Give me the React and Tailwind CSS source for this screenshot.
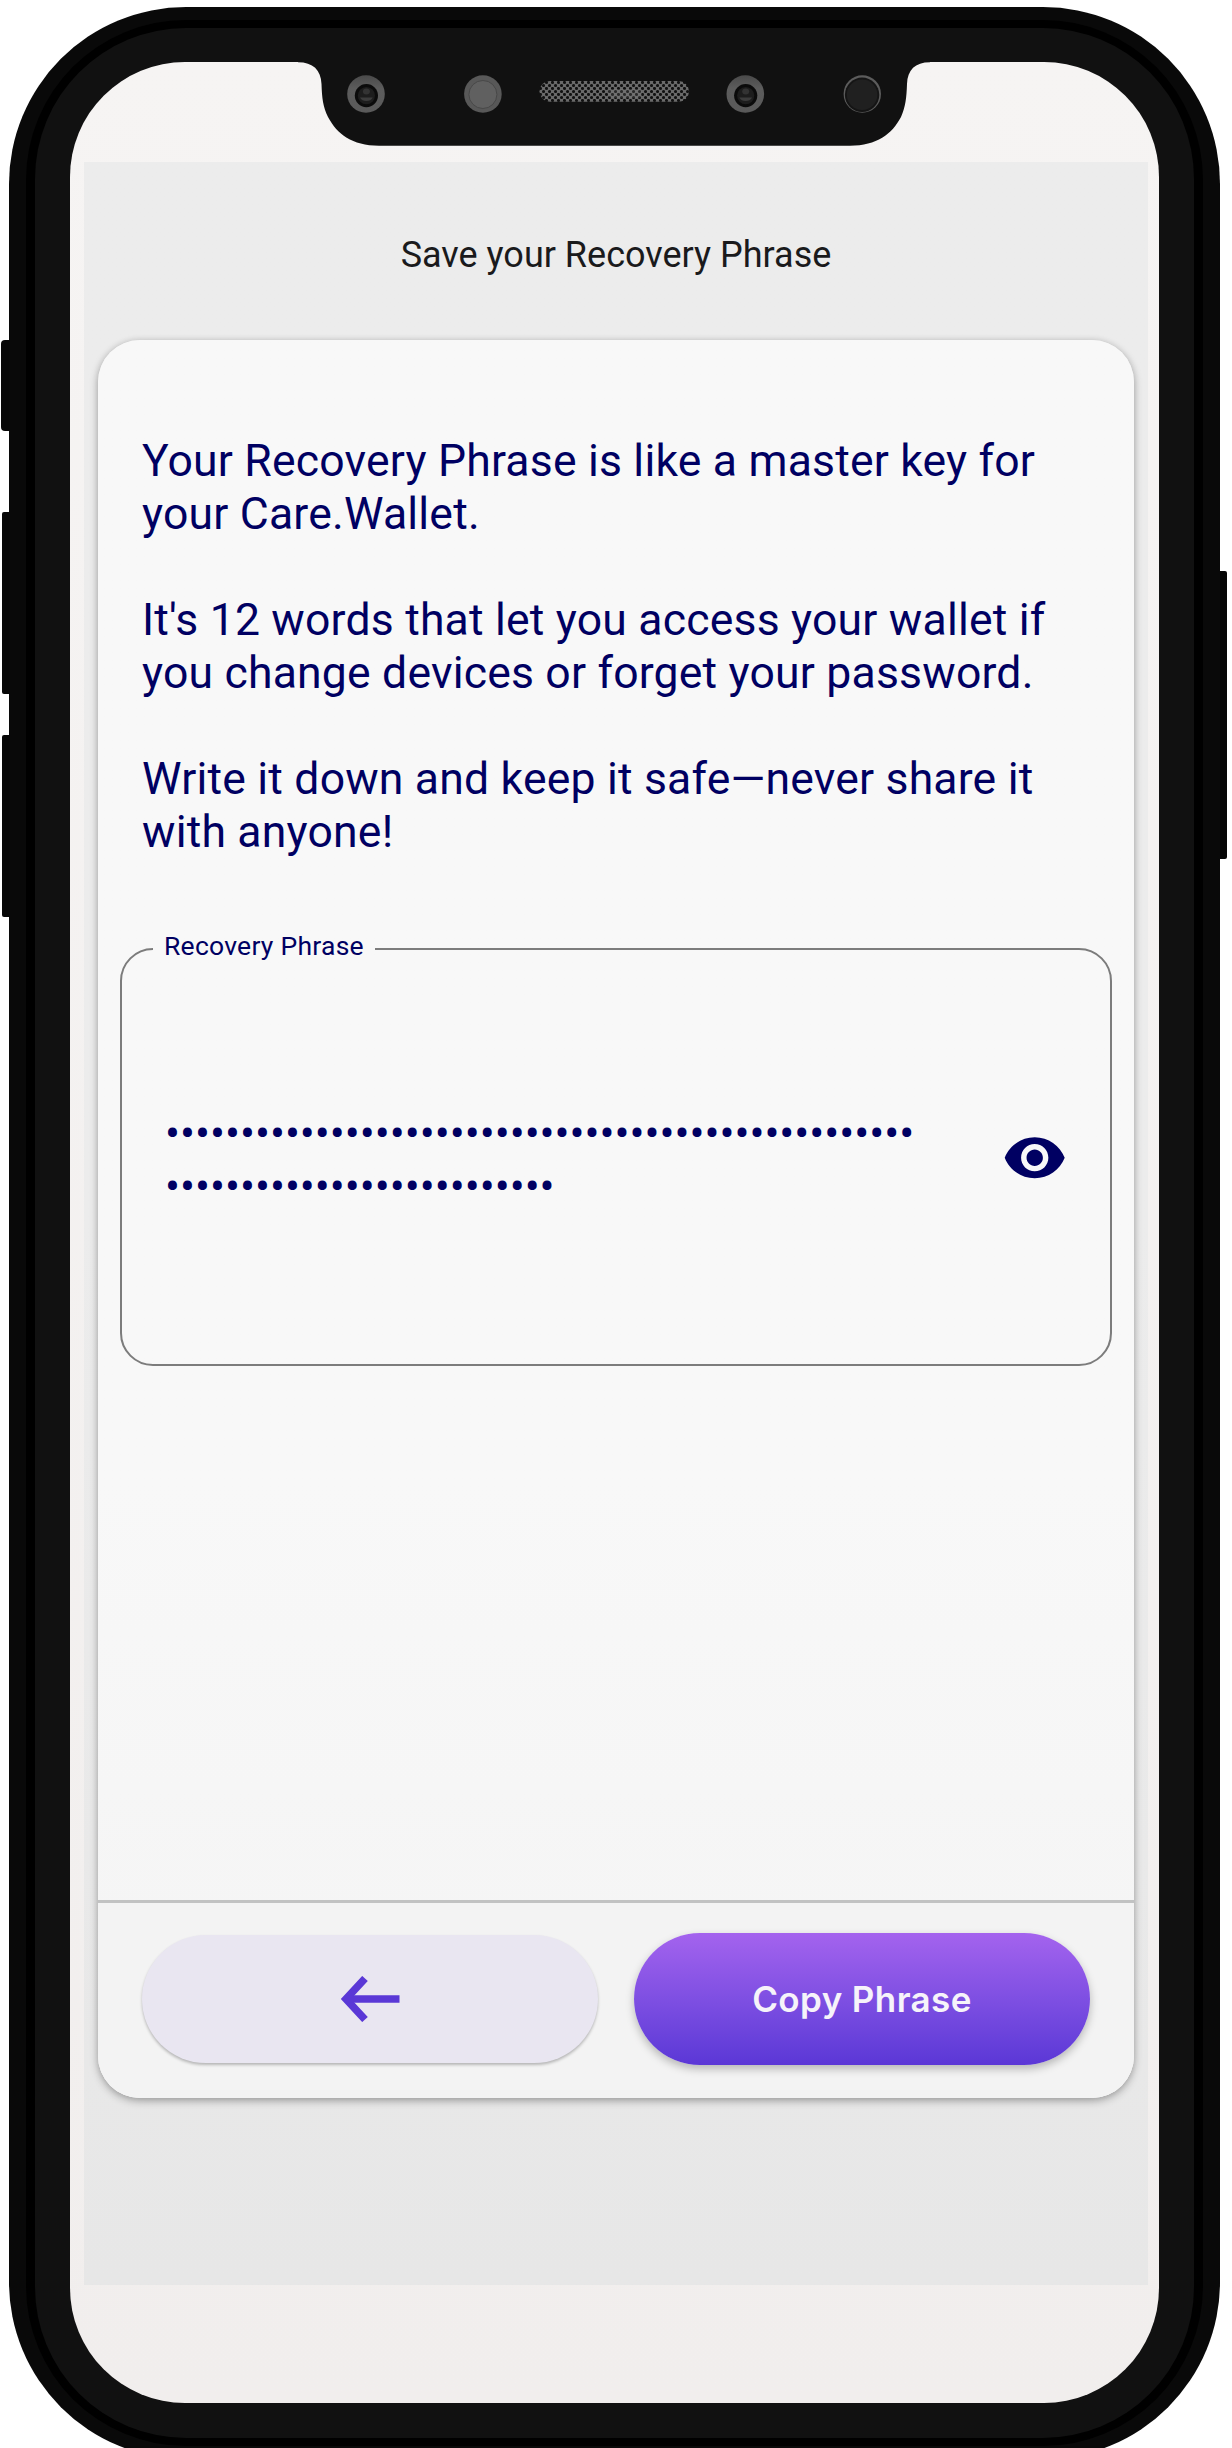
import React from "react";

const PHRASE_LINES = ["•".repeat(50), "•".repeat(26)];

function Lens({ cx }) {
  return (
    <g>
      <circle cx={cx} cy="94" r="18.8" fill="url(#rim)" />
      <circle cx={cx + 0.4} cy="95.6" r="11.6" fill="#0b0b0b" />
      <circle cx={cx + 0.4} cy="95.6" r="8.6" fill="#1d1d1d" />
      <path d={`M${cx - 6} 97.500 h12.800 a7 6 0 0 1 -12.800 0z`} fill="#3c3c3c" />
      <ellipse cx={cx + 0.4} cy="91.500" rx="3.500" ry="3" fill="#333333" />
    </g>
  );
}

function Notch() {
  return (
    <svg className="absolute left-0 top-0" width="1232" height="160" viewBox="0 0 1232 160" aria-hidden="true">
      <defs>
        <pattern id="mesh" width="6" height="6" patternUnits="userSpaceOnUse" x="539" y="81">
          <rect width="6" height="6" fill="#6a6a6a" />
          <circle cx="1.500" cy="1.500" r="1.550" fill="#111111" />
          <circle cx="4.500" cy="4.500" r="1.550" fill="#111111" />
        </pattern>
        <linearGradient id="rim" x1="0" y1="0" x2="0" y2="1">
          <stop offset="0" stopColor="#4a4a4a" />
          <stop offset="0.35" stopColor="#5c5c5c" />
          <stop offset="1" stopColor="#5a5a5a" />
        </linearGradient>
      </defs>
      <path
        d="M298 60 V62.300 C313 62.300 321 70 321.500 84 C322 98 323 107 328 117 C337 134 352 145.700 379 145.700 H850 C877 145.700 892 134 901 117 C905.500 107 906.500 98 907 84 C907.500 70 915 62.300 930 62.300 V60 Z"
        fill="#111111"
      />
      <Lens cx={366} />
      <circle cx="482.900" cy="94" r="18.800" fill="#585858" />
      <circle cx="482.900" cy="94.500" r="14" fill="#606060" stroke="#484848" strokeWidth="1" />
      <rect x="539.500" y="81" width="149.500" height="20.700" rx="10.350" fill="url(#mesh)" />
      <rect x="608" y="89" width="34" height="9" rx="4" fill="#8a8a8a" opacity="0.220" />
      <Lens cx={745.3} />
      <circle cx="862.300" cy="94" r="18.700" fill="#5c5c5c" />
      <circle cx="862.100" cy="94.800" r="17.200" fill="#151515" />
      <circle cx="862.100" cy="94.800" r="15.200" fill="#202020" />
    </svg>
  );
}

function EyeIcon() {
  return (
    <svg width="65.450" height="65.450" viewBox="0 0 24 24" fill="#000062" aria-hidden="true">
      <path d="M12 4.500C7 4.500 2.730 7.610 1 12c1.730 4.390 6 7.500 11 7.500s9.270-3.110 11-7.500c-1.730-4.390-6-7.500-11-7.500zM12 17c-2.760 0-5-2.240-5-5s2.240-5 5-5 5 2.240 5 5-2.240 5-5 5zm0-8c-1.660 0-3 1.340-3 3s1.340 3 3 3 3-1.340 3-3-1.340-3-3-3z" />
    </svg>
  );
}

function ArrowLeft() {
  return (
    <svg width="60" height="46" viewBox="0 0 60 46" fill="none" stroke="#5a38d6" strokeWidth="7.600" aria-hidden="true">
      <path d="M25 2.500 L6 23 L25 43.500" />
      <path d="M6 23 H59.500" />
    </svg>
  );
}

export default function App() {
  return (
    <div className="relative h-[2448px] w-[1232px] overflow-hidden bg-white font-['Roboto',sans-serif]">
      <div className="absolute left-[1px] top-[340px] h-[91px] w-[14px] rounded-l-[4px] bg-[#080808]" />
      <div className="absolute left-[2px] top-[512px] h-[182px] w-[14px] rounded-l-[2px] bg-[#080808]" />
      <div className="absolute left-[2px] top-[735px] h-[182px] w-[14px] rounded-l-[2px] bg-[#080808]" />
      <div className="absolute left-[1213px] top-[571px] h-[288px] w-[14px] rounded-r-[2px] bg-[#050505]" />

      <div className="relative pl-[9px] pt-[7px]">
        <div className="h-[2452px] w-[1210.500px] rounded-[177px] bg-[#090909] px-[17px] py-[13px]">
          <div className="h-full rounded-[160px] bg-black px-[9px] py-[8px]">
            <div className="h-full rounded-[151px] bg-[#111111] px-[35px] pb-[34px] pt-[34px]">
              <div className="h-[2341px] w-[1088.500px] overflow-hidden rounded-[115px] bg-linear-to-b from-[#f6f4f3] to-[#f1eeed] pl-[14px] pt-[100px]">
                <main className="flex h-[2123px] w-[1064px] flex-col bg-linear-to-b from-[#ececec] via-[#ececec] to-[#e7e7e7] px-[14px]">
                  <header className="flex h-[178px] items-center justify-center">
                    <h1 className="whitespace-nowrap pt-[8px] text-[36px] leading-[42px] text-[#1a1a1c]">
                      Save your Recovery Phrase
                    </h1>
                  </header>

                  <section className="flex h-[1758px] w-[1036px] flex-col overflow-hidden rounded-[42px] bg-linear-to-b from-[#f8f8f8] via-[#f8f8f8] via-65% to-[#f4f4f4] shadow-[0_3px_8px_rgba(0,0,0,0.300),0_0_6px_rgba(0,0,0,0.080)]">
                    <div className="flex flex-1 flex-col px-[22px] pt-[95px]">
                      <div className="flex flex-col gap-[53px] whitespace-nowrap pl-[22px] text-[44.500px] leading-[53px] tracking-[0.200px] text-[#000062]">
                        <p>Your Recovery Phrase is like a master key for<br />your Care.Wallet.</p>
                        <p>It's 12 words that let you access your wallet if<br />you change devices or forget your password.</p>
                        <p>Write it down and keep it safe—never share it<br />with anyone!</p>
                      </div>

                      <fieldset className="mt-[72px] h-[435px] w-[992px] rounded-[33px] border-2 border-[#7c7c7c] pl-[43px] pr-[43px]">
                        <legend className="ml-[-12px] h-[36px] w-[222px] whitespace-nowrap pl-[11px] text-[26.500px] leading-[30px] tracking-[0.250px] text-[#000062]">
                          Recovery Phrase
                        </legend>
                        <div className="flex h-[382px] items-center justify-between">
                          <div className="pt-[5px] text-[44.500px] leading-[53px] tracking-[-0.030px] text-[#000062]">
                            {PHRASE_LINES.map((line, i) => (
                              <p key={i} className="whitespace-nowrap">{line}</p>
                            ))}
                          </div>
                          <button type="button" aria-label="Show recovery phrase">
                            <EyeIcon />
                          </button>
                        </div>
                      </fieldset>
                    </div>

                    <footer className="flex h-[198px] items-center gap-[36px] border-t-[3px] border-[#c1c2c2] bg-[#f3f3f3] pb-[4px] pl-[44px]">
                      <button
                        type="button"
                        aria-label="Back"
                        className="flex h-[128px] w-[456px] items-center justify-center rounded-full bg-[#e9e6f1] shadow-[0_2px_3px_rgba(0,0,0,0.250)]"
                      >
                        <ArrowLeft />
                      </button>
                      <button
                        type="button"
                        className="flex h-[132px] w-[456px] items-center justify-center rounded-full bg-linear-to-b from-[#a463ee] to-[#5b37d6] pt-[2px] font-['Inter',sans-serif] text-[35px] font-semibold tracking-[0.400px] text-[#f6f3fa] shadow-[0_4px_8px_rgba(0,0,0,0.250)]"
                      >
                        Copy Phrase
                      </button>
                    </footer>
                  </section>
                </main>
              </div>
            </div>
          </div>
        </div>
      </div>

      <Notch />
    </div>
  );
}
